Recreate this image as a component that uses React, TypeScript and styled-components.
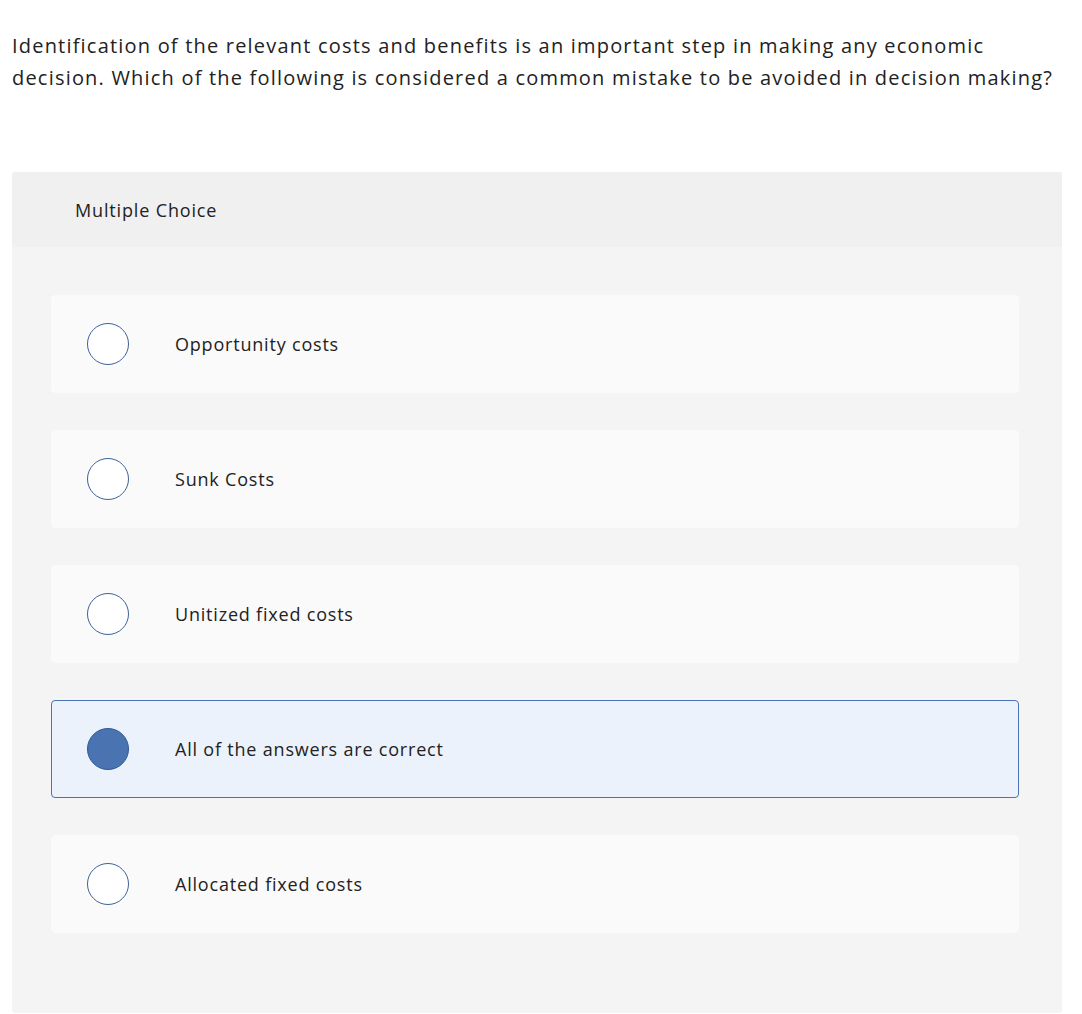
import styled, { createGlobalStyle } from "styled-components";

const GlobalStyle = createGlobalStyle`
  html, body {
    margin: 0;
    padding: 0;
    background: #ffffff;
  }
  body {
    font-family: "Open Sans", "Liberation Sans", sans-serif;
    color: #222222;
  }
`;

const Page = styled.div`
  padding: 30px 12px 0 12px;
  width: 1082px;
  box-sizing: border-box;
`;

const Question = styled.p`
  margin: 0 0 78px 0;
  font-size: 20px;
  line-height: 32px;
  letter-spacing: 1.2px;
  color: #222222;
`;

const Panel = styled.div`
  width: 1050px;
  background: #f4f4f4;
  border-radius: 3px;
  padding-bottom: 80px;
`;

const PanelHeader = styled.div`
  height: 75px;
  background: #f0f0f0;
  border-radius: 3px 3px 0 0;
  display: flex;
  align-items: center;
  padding-left: 63px;
  font-size: 18px;
  letter-spacing: 0.85px;
  color: #222222;
`;

const Options = styled.div`
  display: flex;
  flex-direction: column;
  gap: 37px;
  padding: 48px 43px 0 39px;
`;

const Option = styled.div<{ $selected?: boolean }>`
  height: 98px;
  box-sizing: border-box;
  display: flex;
  align-items: center;
  border-radius: 4px;
  background: ${(p) => (p.$selected ? "#ebf2fb" : "#fafafa")};
  border: 1px solid ${(p) => (p.$selected ? "#4a74b6" : "#fafafa")};
  padding-left: 35px;
  cursor: pointer;
`;

const Radio = styled.span<{ $checked?: boolean }>`
  width: 42px;
  height: 42px;
  box-sizing: border-box;
  border-radius: 50%;
  flex-shrink: 0;
  border: 1.5px solid ${(p) => (p.$checked ? "#2f5a99" : "#3d6399")};
  background: ${(p) => (p.$checked ? "#4a73b2" : "#ffffff")};
`;

const Label = styled.span`
  margin-left: 46px;
  font-size: 18px;
  letter-spacing: 0.8px;
  color: #222222;
`;

const answers = [
  "Opportunity costs",
  "Sunk Costs",
  "Unitized fixed costs",
  "All of the answers are correct",
  "Allocated fixed costs",
];

const App = () => {
  const selected = 3;
  return (
    <Page>
      <GlobalStyle />
      <Question>
        Identification of the relevant costs and benefits is an important step
        in making any economic decision. Which of the following is considered a
        common mistake to be avoided in decision making?
      </Question>
      <Panel>
        <PanelHeader>Multiple Choice</PanelHeader>
        <Options>
          {answers.map((answer, i) => (
            <Option key={answer} $selected={i === selected}>
              <Radio $checked={i === selected} />
              <Label>{answer}</Label>
            </Option>
          ))}
        </Options>
      </Panel>
    </Page>
  );
};

export default App;
